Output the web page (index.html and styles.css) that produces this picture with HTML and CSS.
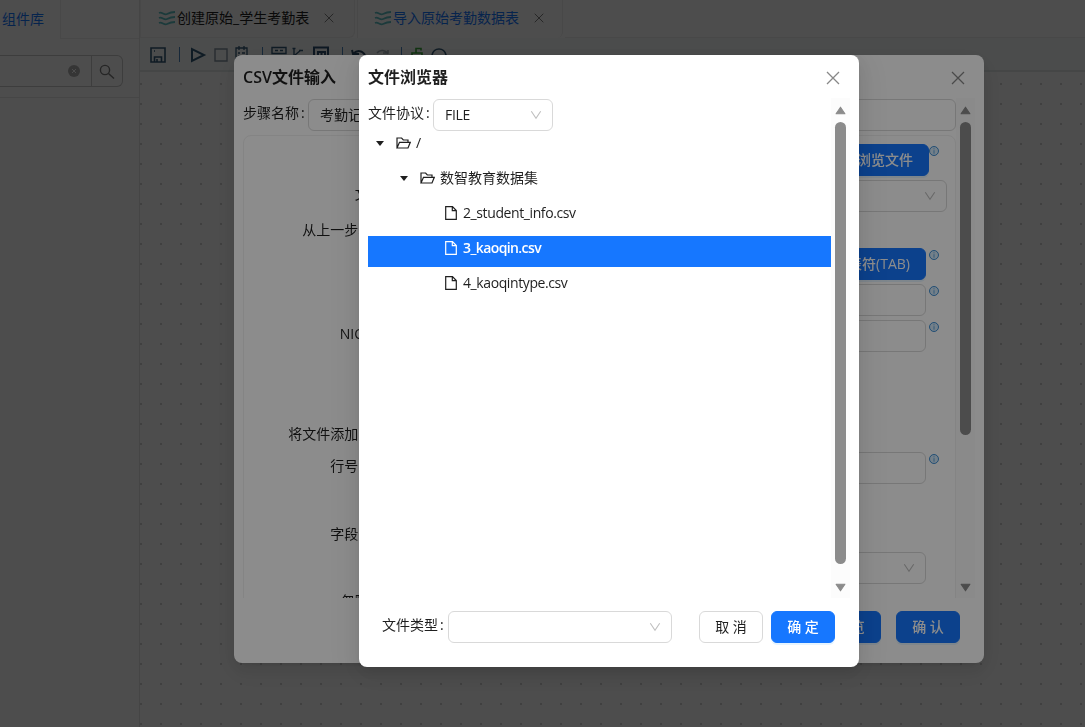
FILE: index.html
```html
<!DOCTYPE html>
<html lang="zh-CN">
<head>
    <meta charset="UTF-8" />
    <title>导入原始考勤数据表</title>
    <link rel="stylesheet" href="styles.css">
</head>
<body>

<svg class="symbols" width="0" height="0">
    <symbol id="close" viewBox="0 0 14 14"><path d="M1 1l12 12M13 1L1 13" fill="none" stroke="currentColor" stroke-width="1.3"/></symbol>
    <symbol id="down" viewBox="0 0 12 12"><path d="M1.3 2.2L6 9.2l4.7-7" fill="none" stroke="currentColor" stroke-width="1.1"/></symbol>
    <symbol id="wave" viewBox="0 0 18 16"><path d="M1 3c3-1.500 5 2.500 8 1s5-2 8-2M1 8c3-1.500 5 2.500 8 1s5-2 8-2M1 13c3-1.500 5 2.500 8 1s5-2 8-2" fill="none" stroke="currentColor" stroke-width="1.8"/></symbol>
    <symbol id="folder" viewBox="0 0 15 12"><path d="M1 11V1h4.600l1.700 2H12v2.200M1 11h11l2.300-5.700H3.500L1 11z" fill="none" stroke="currentColor" stroke-width="1.2"/></symbol>
    <symbol id="file" viewBox="0 0 12 14"><path d="M.7.700h6.800l3.800 3.800v8.800H.7zM7.300.7v4h4" fill="none" stroke="currentColor" stroke-width="1.2"/></symbol>
    <symbol id="info" viewBox="0 0 10 10"><circle cx="5" cy="5" r="4.500" fill="#d3e9fa" stroke="#2a82cf" stroke-width=".9"/><path d="M5 2.300v1M5 4.200v3.500" stroke="#5ea3dd"/></symbol>
    <symbol id="up-arrow" viewBox="0 0 10 8"><path d="M5 1L9 7H1z" fill="#8b8b8b" stroke="#8b8b8b" stroke-linejoin="round"/></symbol>
    <symbol id="down-arrow" viewBox="0 0 10 8"><path d="M5 7L9 1H1z" fill="#8b8b8b" stroke="#8b8b8b" stroke-linejoin="round"/></symbol>
</svg>

<div class="app">
    <aside class="sidebar">
        <div class="side-tabs"><span class="side-tab">组件库</span></div>
        <div class="search">
            <div class="search-input">
                <svg width="12" height="12" viewBox="0 0 12 12"><circle cx="6" cy="6" r="6" fill="#b0b0b0"/><path d="M4 4l4 4M8 4L4 8" stroke="#fff"/></svg>
            </div>
            <div class="search-btn">
                <svg width="16" height="16" viewBox="0 0 16 16"><circle cx="6" cy="6" r="4.600" fill="none" stroke="#7c7c7c" stroke-width="1.400"/><path d="M9.500 9.500L15 14.500" stroke="#7c7c7c" stroke-width="1.500"/></svg>
            </div>
        </div>
    </aside>
    <main class="main">
        <div class="tabs">
            <div class="tab"><svg class="wave"><use href="#wave"/></svg><span>创建原始_学生考勤表</span><svg class="tab-close"><use href="#close"/></svg></div>
            <div class="tab active"><svg class="wave"><use href="#wave"/></svg><span>导入原始考勤数据表</span><svg class="tab-close"><use href="#close"/></svg></div>
            <div class="tab-rest"></div>
        </div>
        <div class="toolbar">
            <svg width="310" height="18" viewBox="0 0 310 18" fill="none" stroke="#345a78" stroke-width="1.600">
                <path d="M1 2h14v14H1zM4.500 16v-5h7v5M4 5h1M7 16v-3"/>
                <path d="M29.500 1v15M112.500 1v15M192.500 1v15M251.500 1v15" stroke="#4d86bd" stroke-width="1"/>
                <path d="M42 3v12l12-6z" stroke-width="2"/>
                <path d="M65 3h12v12H65z" stroke="#8492a0" stroke-width="1.400"/>
                <path d="M86 2h11v14H86zM89 0v4M94 0v4M88 7h2M92 7h3M88 10h2" stroke-width="1.300"/>
                <path d="M122 1.500h14v6h-14zM125 4.500h3M130 4.500h3" stroke-width="1.400"/>
                <path d="M144 2.500v12M142.500 2.500h3M145 9l6-5M149 4.500h4" stroke-width="1.400"/>
                <path d="M164 1.500h14v14h-14zM168 15V6h7v9M171.500 6v9" stroke="#2d4f70" stroke-width="2"/>
                <path d="M202 4l1 4h6M203 8c4-4 9-4 12 1" stroke="#27445f" stroke-width="2"/>
                <path d="M238 8c-2-4-8-5-11-1M233 7h5V4" stroke="#a5afb8"/>
                <path d="M262 7h10v8h-10zM266 7V2.500h5v2" stroke="#38a838" stroke-width="1.600"/>
                <path d="M282 9c2-8 12-8 14 0c-2 8-12 8-14 0"/>
            </svg>
        </div>
        <div class="canvas"></div>
    </main>
</div>

<div class="mask"></div>

<div class="dialog csv-dialog">
    <div class="dialog-title">CSV文件输入<svg class="close"><use href="#close"/></svg></div>
    <div class="dialog-body">
        <div class="content">
            <div class="top-row"><span class="top-label">步骤名称<i>:</i></span><div class="input step-name">考勤记录</div></div>
            <div class="panel">
                <div class="row"><span></span><div class="ctl"><div class="btn primary browse">浏览文件</div></div><svg class="info"><use href="#info"/></svg></div>
                <div class="row"><label>文件名称 :</label><div class="ctl wide"><div class="input select"><svg><use href="#down"/></svg></div></div></div>
                <div class="row prev-step"><label>从上一步获取字段:</label></div>
                <div class="row"><span></span><div class="ctl"><div class="btn primary">插入制表符(TAB)</div></div><svg class="info"><use href="#info"/></svg></div>
                <div class="row"><span></span><div class="ctl"><div class="input"></div></div><svg class="info"><use href="#info"/></svg></div>
                <div class="row"><label>NIO 缓存区 :</label><div class="ctl"><div class="input"></div></div><svg class="info"><use href="#info"/></svg></div>
                <div class="row add-file"><label>将文件添加到结果中:</label></div>
                <div class="row"><label>行号字段名称:</label><div class="ctl"><div class="input"></div></div><svg class="info"><use href="#info"/></svg></div>
                <div class="row field"><label>字段剪裁方式:</label></div>
                <div class="row encoding"><span></span><div class="ctl"><div class="input select"><svg><use href="#down"/></svg></div></div></div>
                <div class="row"><label>忽略空的行 :</label></div>
            </div>
        </div>
        <div class="scrollbar short"><svg><use href="#up-arrow"/></svg><div class="thumb"></div><svg class="end"><use href="#down-arrow"/></svg></div>
    </div>
    <div class="dialog-footer csv-footer">
        <div class="btn primary">预 览</div>
        <div class="btn primary">确 认</div>
    </div>
</div>

<div class="mask"></div>

<div class="dialog file-dialog">
    <div class="dialog-title">文件浏览器<svg class="close"><use href="#close"/></svg></div>
    <div class="dialog-body">
        <div class="content">
            <div class="top-row"><span class="top-label">文件协议<i>:</i></span><div class="input select protocol"><span>FILE</span><svg><use href="#down"/></svg></div></div>
            <div class="tree">
                <div class="node"><b class="caret"></b><svg class="folder"><use href="#folder"/></svg>/</div>
                <div class="node level-1"><b class="caret"></b><svg class="folder"><use href="#folder"/></svg>数智教育数据集</div>
                <div class="node level-2"><svg class="file"><use href="#file"/></svg><span>2_student_info.csv</span></div>
                <div class="node level-2 selected"><svg class="file"><use href="#file"/></svg><span>3_kaoqin.csv</span></div>
                <div class="node level-2"><svg class="file"><use href="#file"/></svg><span>4_kaoqintype.csv</span></div>
            </div>
        </div>
        <div class="scrollbar"><svg><use href="#up-arrow"/></svg><div class="thumb"></div><svg class="end"><use href="#down-arrow"/></svg></div>
    </div>
    <div class="dialog-footer">
        <span class="type-label">文件类型<i>:</i></span>
        <div class="input select file-type"><svg><use href="#down"/></svg></div>
        <div class="btn">取 消</div>
        <div class="btn primary">确 定</div>
    </div>
</div>

</body>
</html>
```
FILE: styles.css
```css
* {
    box-sizing: border-box;
}
body {
    margin: 0;
    height: 727px;
    overflow: hidden;
    font-family: "Open Sans", "Noto Sans CJK SC", sans-serif;
    font-size: 14px;
    line-height: 22px;
    color: #1f1f1f;
    background: #fff;
}
svg {
    display: block;
    flex: none;
}
i {
    font-style: normal;
    margin-left: 2px;
}
.symbols {
    position: absolute;
}

/* workspace */
.app {
    display: flex;
    height: 727px;
}
.sidebar {
    width: 140px;
    border-right: 1px solid #e4e4e4;
}
.side-tabs {
    height: 39px;
    display: flex;
    background: linear-gradient(#eee, #eee) 60px 38px / 80px 1px no-repeat;
}
.side-tab {
    width: 61px;
    padding: 8px 0 0 2px;
    color: #1677ff;
    border-right: 1px solid #eee;
}
.search {
    display: flex;
    height: 59px;
    padding-top: 16px;
    border-bottom: 1px solid #e8e8e8;
}
.search-input {
    width: 92px;
    height: 32px;
    display: flex;
    align-items: center;
    justify-content: flex-end;
    padding-right: 11px;
    border: 1px solid #c9c9c9;
    border-left: 0;
}
.search-btn {
    width: 31px;
    height: 32px;
    padding: 8px 7px;
    border: 1px solid #c9c9c9;
    border-left: 0;
    border-radius: 0 6px 6px 0;
}
.main {
    flex: 1;
    display: flex;
    flex-direction: column;
}
.tabs {
    height: 38px;
    display: flex;
    gap: 2px;
}
.tab {
    width: 215px;
    padding: 7px 0 0 17px;
    display: flex;
    background: #fafafa;
    border: 1px solid #eee;
    border-top: 0;
    border-radius: 0 0 6px 0;
}
.tab.active {
    width: 206px;
    padding-left: 16px;
    color: #1677ff;
    background: #fff;
    border-bottom: 0;
}
.tab-rest {
    flex: 1;
    border-bottom: 1px solid #eee;
}
.wave {
    width: 18px;
    height: 16px;
    margin: 3px 1px 0 0;
    color: #5cc0c2;
}
.tab-close {
    width: 10px;
    height: 10px;
    margin: 6px 0 0 15px;
    color: #777;
}
.toolbar {
    height: 34px;
    padding: 8px 0 0 10px;
    background: #f7fbfb;
    border-bottom: 2px solid #e4e9e9;
}
.canvas {
    flex: 1;
    background: radial-gradient(circle, #c8c8c8 0.6px, transparent 1.1px) 11px 2px / 20px 20px;
}

.mask {
    position: fixed;
    inset: 0;
    background: rgba(0, 0, 0, 0.45);
}

/* dialogs */
.dialog {
    position: fixed;
    top: 55px;
    padding: 0 9px;
    background: #fff;
    border-radius: 8px;
    box-shadow: 0 6px 16px rgba(0, 0, 0, 0.08), 0 3px 6px -4px rgba(0, 0, 0, 0.12), 0 9px 28px 8px rgba(0, 0, 0, 0.05);
}
.csv-dialog {
    left: 234px;
    width: 750px;
    height: 608px;
}
.file-dialog {
    left: 359px;
    width: 500px;
    height: 612px;
}
.dialog-title {
    height: 43px;
    padding-top: 10px;
    display: flex;
    justify-content: space-between;
    font-size: 16px;
    line-height: 24px;
    font-weight: 600;
}
.close {
    width: 14px;
    height: 14px;
    margin: 6px 10px 0 0;
    color: #888;
}
.dialog-body {
    height: 500px;
    display: flex;
    overflow: hidden;
}
.content {
    flex: 1;
}
.scrollbar {
    width: 19px;
    padding: 8px 0 6px;
    display: flex;
    flex-direction: column;
    align-items: center;
    background: #fcfcfc;
}
.scrollbar svg {
    width: 11px;
    height: 9px;
}
.thumb {
    flex: none;
    width: 11px;
    height: 442px;
    margin-top: 7px;
    border-radius: 6px;
    background: #8b8b8b;
}
.short .thumb {
    height: 313px;
}
.scrollbar .end {
    margin-top: auto;
}
.top-row {
    display: flex;
    padding-top: 1px;
}
.top-label {
    width: 65px;
    padding-top: 3px;
    white-space: nowrap;
}
.input {
    height: 32px;
    border: 1px solid #d9d9d9;
    border-radius: 6px;
    padding: 4px 10px 4px 11px;
}
.select {
    display: flex;
    align-items: center;
    justify-content: space-between;
}
.select span {
    letter-spacing: -0.3px;
}
.select svg {
    width: 12px;
    height: 12px;
    margin-left: auto;
    color: #bfbfbf;
}
.step-name {
    flex: 1;
}
.protocol {
    width: 120px;
}
.panel {
    height: 520px;
    margin-top: 4px;
    padding-top: 8px;
    border: 1px solid #f0f0f0;
    border-radius: 8px;
}
.row {
    display: grid;
    grid-template-columns: 174px 508px 10px;
    height: 32px;
    margin-bottom: 4px;
}
.row label {
    padding-top: 3px;
    text-align: right;
    white-space: nowrap;
}
.ctl {
    display: flex;
    justify-content: flex-end;
}
.ctl .input {
    flex: 1;
    margin-left: 12px;
}
.ctl.wide {
    margin-right: -21px;
}
.browse {
    margin-right: -3px;
}
.info {
    width: 10px;
    height: 10px;
    margin: 2px 0 0 3px;
}
.row.prev-step {
    height: 28px;
}
.row.add-file {
    height: 28px;
    margin-top: 68px;
}
.row.field {
    margin-top: 36px;
    height: 28px;
}
.row.encoding {
    margin-bottom: 3px;
}
.btn {
    height: 32px;
    padding: 4px 15px;
    border: 1px solid #d9d9d9;
    border-radius: 6px;
    text-align: center;
    white-space: nowrap;
}
.btn.primary {
    color: #fff;
    font-weight: 500;
    background: #1677ff;
    border-color: #1677ff;
    box-shadow: 0 2px 0 rgba(5, 145, 255, 0.1);
}

/* file tree */
.node {
    height: 31px;
    margin-bottom: 4px;
    padding: 1px 0 0 7px;
    display: flex;
}
.level-1 {
    padding-left: 31px;
}
.level-2 {
    padding-left: 77px;
}
.level-2 span {
    letter-spacing: -0.4px;
}
.selected {
    color: #fff;
    font-weight: 600;
    background: #1677ff;
}
.level-2.selected span {
    letter-spacing: -0.6px;
}
.caret {
    margin: 9px 12px 0 1px;
    height: 0;
    border: 4px solid transparent;
    border-top: 5px solid #1f1f1f;
    border-bottom: 0;
}
.folder {
    width: 15px;
    height: 12px;
    margin: 5px 5px 0 0;
}
.file {
    width: 12px;
    height: 14px;
    margin: 4px 6px 0 0;
}

.dialog-footer {
    display: flex;
    padding: 13px 15px 0 14px;
}
.dialog-footer .btn {
    width: 64px;
    margin-left: 8px;
}
.csv-footer {
    justify-content: flex-end;
}
.csv-footer .btn {
    margin-left: 15px;
}
.type-label {
    width: 66px;
    padding-top: 3px;
}
.file-type {
    width: 224px;
    margin-right: 19px;
}
```
